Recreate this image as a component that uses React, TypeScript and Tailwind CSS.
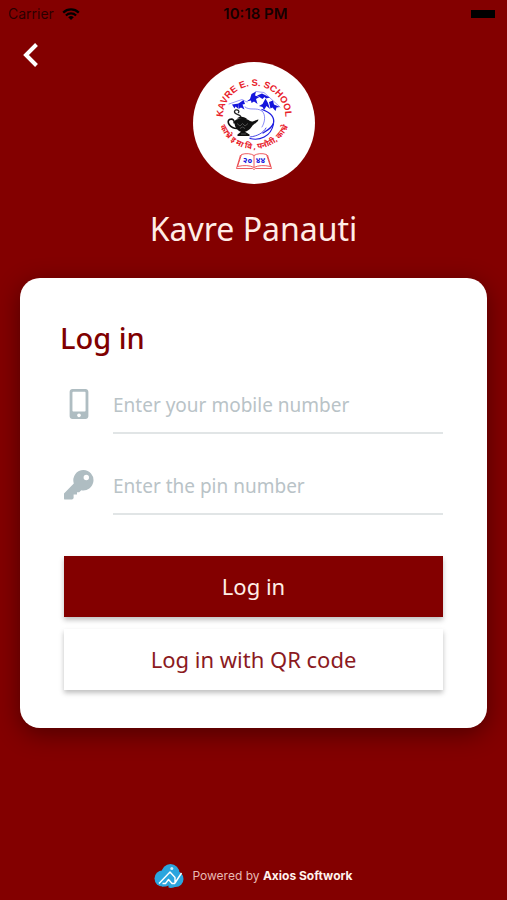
import React from 'react';
import { FaMobileAlt } from 'react-icons/fa';

const WifiIcon = () => (
    <svg width="18" height="12" viewBox="0 0 18 12" aria-hidden="true">
        <path d="M1.2 4.6a11.2 11.2 0 0 1 15.6 0" fill="none" stroke="black" strokeWidth="2.3" />
        <path d="M3.9 7.5a7.3 7.3 0 0 1 10.2 0" fill="none" stroke="black" strokeWidth="2.2" />
        <path d="M9 12 6.2 9.3a4.1 4.1 0 0 1 5.6 0z" fill="black" />
    </svg>
);

const KeyIcon = () => (
    <svg width="30" height="30" viewBox="0 0 30 30" fill="currentColor" fillRule="evenodd" aria-hidden="true">
        <path d="M19.6 0a10.200 10.200 0 1 1-2.300 20.200L15.200 22.200H13V24.600H9.600V28.200L8.200 29.600H1.200A1.200 1.200 0 0 1 0 28.400V23.600L9.800 13.400A10.200 10.200 0 0 1 19.600 0zM22.300 4.800a2.700 2.700 0 1 0 0 5.400a2.700 2.700 0 0 0 0-5.400z" />
    </svg>
);

const SchoolLogo = () => (
    <svg viewBox="0 0 122 122" className="size-[122px]" role="img" aria-label="Kavre E. S. School">
        <defs>
            <path id="arc-top" d="M30 62V55A31.2 31.2 0 0 1 92.4 55V62" />
            <path id="arc-bottom" d="M26 61A36.5 36.5 0 0 0 96 61" />
        </defs>
        <circle cx="61" cy="61" r="61" fill="white" />

        <text fill="#e8202a" fontSize="9.4" fontWeight="700" fontFamily="'Liberation Sans', sans-serif" textAnchor="middle">
            <textPath href="#arc-top" startOffset="50%">KAVRE E. S. SCHOOL</textPath>
        </text>
        <text fill="#e8202a" fontSize="8" fontWeight="700" fontFamily="'Noto Sans', sans-serif" textAnchor="middle">
            <textPath href="#arc-bottom" startOffset="50%">काभ्रे इ मा वि , पनौती, काभ्रे</textPath>
        </text>

        {/* mountains */}
        <g fill="#1414dc">
            <path d="M39 42.500 46 41.500 45 46.500 42.500 44.500 41.500 46.500z" />
            <path d="M45.500 41.500 50.500 38 52 42 49.500 42.500 51.500 47.500 48 45.500 45.500 47z" />
            <path d="M53.500 39.500 57 37 58.500 32 63 29.500 62 33.500 66.500 35 63 37 64.500 42 61 39.500 58.500 41 58 38.500z" />
            <path d="M64 33.500 69 31.500 77 35.500 73 36.500 71.500 35 69.500 37z" />
            <path d="M66 44 69.500 42 72.500 36.500 75 41 77 47 73.500 44 71 48 69.500 45z" />
            <path d="M76 40 80 38.500 81 42.500 87 45 83.500 45.500 82.500 49 79.500 45.500 77.500 46.500z" />
        </g>
        <g fill="none" stroke="#3a3af0" strokeLinecap="round">
            <path d="M36 42 49 37.500 54 40 M63 29.500 71 30.500 87 45" strokeWidth=".5" />
            <path d="M52 45C57 49 63 45 69 49C73 53 72 60 69 65" strokeWidth=".6" />
        </g>
        <g fill="none" stroke="#1c1ce0" strokeLinecap="round">
            <path d="M69 47.500C76 50 82 54 80.500 61C79 66 75 68 70 71" strokeWidth="1.300" />
            <path d="M57 76.500C66 79 78 75 80.500 62" strokeWidth="1.200" />
            <path d="M57 75C65 74 70 71 73 66" strokeWidth=".8" />
        </g>

        {/* oil lamp */}
        <g>
            <path d="M42 58.500C46 55.500 54 56 57 59C60 60.500 62 58 65.500 57.500C65 60.500 61 61.500 58.500 65C56.500 68 54 69.300 52 69.800L56.500 72.500V74H44.500V72.500L48 69.800C43.500 68 40.500 64 42 58.500z" fill="#101010" />
            <path d="M44 66.500C37 66.500 33 59.500 36.500 57.500C40 56 42 59 41 61.500" fill="none" stroke="#101010" strokeWidth="1.6" />
            <path d="M44 56.500C46 54 51.500 54 54.500 57.500z" fill="#101010" />
            <path d="M48 55C47 51.500 41 53 41.500 49.500C42.500 46 48 49 45 51" fill="none" stroke="#222" strokeWidth="1.3" />
            <path d="M44 61.500 47 64 49.500 61.500 52 64 55 61.500M47 66.500 49.500 65 52 66.500M48 72H53" fill="none" stroke="#777" strokeWidth=".6" />
        </g>

        {/* open book */}
        <g fill="none" stroke="#e8343a" strokeWidth=".8">
            <path d="M48.500 92.500C53 91 58 91.500 61 93.500C64 91.500 69 91 73.500 92.500L77.500 104.500C71 103 65 103.300 61 105.500C57 103.300 51 103 44.500 104.500z" />
            <path d="M47.500 93 43.500 106.500H59.500L61 107.500 62.500 106.500H78.500L74.500 93M61 93.500V105" />
        </g>
        <g fill="#1414dc" fontSize="8.5" fontWeight="700" fontFamily="'Noto Sans', sans-serif" textAnchor="middle">
            <text x="54.500" y="101">२०</text>
            <text x="67.500" y="101">४४</text>
        </g>
    </svg>
);

const AxiosLogo = () => (
    <svg width="30" height="26" viewBox="0 0 30 26" aria-hidden="true">
        <g fill="#2ba5de">
            <circle cx="16.5" cy="10" r="9" />
            <circle cx="8.5" cy="15.500" r="8" />
            <circle cx="21.500" cy="16" r="8" />
            <path d="M8 15H22V23.500C20 25 16 25.200 14.500 24.500V22.500L12 23.500H8z" />
        </g>
        <path d="M5 20.500 16 9 21 14.500V20L27.500 10M8.500 20.500H11.500L14.500 16.500 18 20.500H21" fill="none" stroke="white" strokeWidth="1.400" strokeLinejoin="round" />
        <circle cx="17.800" cy="5.500" r="1.500" fill="#c9ecfb" />
    </svg>
);

interface FieldProps {
    id: string;
    type: string;
    placeholder: string;
    icon: React.ReactNode;
}

const Field = ({ id, type, placeholder, icon }: FieldProps) => (
    <div className="flex h-[58px] items-stretch">
        <label htmlFor={id} aria-label={placeholder} className="flex w-[49px] items-center pb-0.5 text-[#afbdc2]">
            {icon}
        </label>
        <input
            id={id}
            type={type}
            placeholder={placeholder}
            className="min-w-0 flex-1 border-b-2 border-[#e1e5e6] bg-transparent pt-0.5 text-[19px] text-[#800000] outline-none placeholder:text-[#b9c3c7]"
        />
    </div>
);

export default function App() {
    return (
        <div className="flex min-h-screen flex-col bg-[#830000] font-['Noto_Sans',sans-serif]">
            {/* Status bar */}
            <div className="grid h-7 grid-cols-3 items-center px-2 font-['Inter',sans-serif] text-sm text-black">
                <div className="flex items-center gap-2 text-black/70">
                    Carrier
                    <WifiIcon />
                </div>
                <div className="pl-1 text-center text-[15px] font-semibold text-black/85">10:18 PM</div>
                <div className="mr-1 h-2 w-6 justify-self-end bg-black" />
            </div>

            <header className="grid grid-cols-[1fr_auto_1fr] items-start px-4 pt-3">
                <button type="button" aria-label="Back" className="flex size-[30px] items-center justify-center">
                    <svg width="16" height="26" viewBox="0 0 16 26" fill="none" stroke="white" strokeWidth="4">
                        <path d="M13.500 2.500 3 13 13.500 23.500" />
                    </svg>
                </button>
                <div className="mt-[22px]">
                    <SchoolLogo />
                </div>
            </header>

            <h1 className="mt-[25px] text-center text-[32px] leading-10 text-[#ffede6]">Kavre Panauti</h1>

            <main className="mx-5 mt-[29px] rounded-[20px] bg-white px-9 pt-10 pb-[38px] shadow-[0_6px_24px_rgba(0,0,0,0.4)]">
                <h2 className="px-1 text-[29px] leading-10 font-medium text-[#800000]">Log in</h2>
                <form className="mt-[18px] px-2" onSubmit={(e) => e.preventDefault()}>
                    <div className="flex flex-col gap-[23px]">
                        <Field
                            id="mobile"
                            type="tel"
                            placeholder="Enter your mobile number"
                            icon={<FaMobileAlt size={30} />}
                        />
                        <Field id="pin" type="password" placeholder="Enter the pin number" icon={<KeyIcon />} />
                    </div>
                    <div className="mt-[41px] flex flex-col gap-3">
                        <button
                            type="submit"
                            className="h-[61px] bg-[#830000] text-[22px] text-[#ffede6] shadow-[0_3px_5px_rgba(0,0,0,0.25)]"
                        >
                            Log in
                        </button>
                        <button
                            type="button"
                            className="h-[61px] bg-white text-[22px] text-[#8b1a1e] shadow-[0_3px_5px_rgba(0,0,0,0.25)]"
                        >
                            Log in with QR code
                        </button>
                    </div>
                </form>
            </main>

            <footer className="mt-auto flex items-center justify-center gap-2 pb-[11px] font-['Inter',sans-serif] text-xs text-[#e8b9b3]">
                <AxiosLogo />
                <p>
                    Powered by <strong className="font-bold text-[#fff1ec]">Axios Softwork</strong>
                </p>
            </footer>
        </div>
    );
}
